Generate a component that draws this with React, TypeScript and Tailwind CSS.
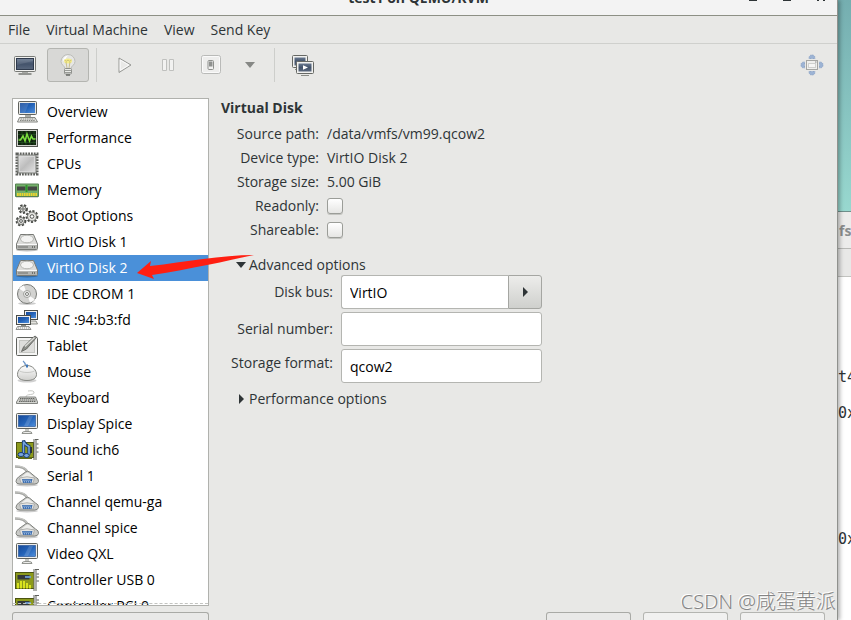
import React, { useState } from "react";

function Svg({ children, size = "size-6" }: { children: React.ReactNode; size?: string }) {
  return (
    <svg viewBox="0 0 24 24" className={`${size} shrink-0`} fill="none" aria-hidden="true">
      {children}
    </svg>
  );
}

function Gradients() {
  return (
    <svg className="absolute size-0" aria-hidden="true">
      <defs>
        <linearGradient id="blue" x1="0" y1="0" x2="1" y2="1">
          <stop offset="0" stopColor="#16499a" />
          <stop offset="0.5" stopColor="#2463b8" />
          <stop offset="1" stopColor="#4f8fdc" />
        </linearGradient>
        <linearGradient id="slate" x1="0" y1="0" x2="0" y2="1">
          <stop offset="0" stopColor="#68788f" />
          <stop offset="0.5" stopColor="#43536b" />
          <stop offset="1" stopColor="#59677d" />
        </linearGradient>
        <linearGradient id="metal" x1="0" y1="0" x2="1" y2="1">
          <stop offset="0" stopColor="#e4e4e4" />
          <stop offset="0.5" stopColor="#bdbdbd" />
          <stop offset="1" stopColor="#e6e6e6" />
        </linearGradient>
        <linearGradient id="shine" x1="0" y1="0" x2="0" y2="1">
          <stop offset="0" stopColor="#ffffff" />
          <stop offset="1" stopColor="#cfcfcc" />
        </linearGradient>
      </defs>
    </svg>
  );
}

function ComputerIcon() {
  return (
    <Svg>
      <rect x="3.5" y="1.5" width="18" height="13" rx="1" fill="#e8e8e4" stroke="#5f615d" />
      <rect x="5" y="3" width="15" height="10" fill="url(#blue)" />
      <path d="M5 3h9l-4 10H5z" fill="#fff" opacity=".12" />
      <path d="M10 15h6v2h-6z" fill="#a9aba6" />
      <path d="M4.500 17.500h15.500l2.500 4.500H2.500z" fill="#e9e9e6" stroke="#777975" strokeWidth=".9" />
      <path d="M5.500 19h14M5 20.500h15" stroke="#777975" strokeWidth=".9" strokeDasharray="1.500 .7" />
    </Svg>
  );
}

function PerformanceIcon() {
  return (
    <Svg>
      <rect x="1.500" y="3.500" width="21" height="17" fill="#11230f" stroke="#555753" />
      <rect x="2.500" y="4.500" width="19" height="15" stroke="#d0d1cc" />
      <path d="M3 8.500h18M3 12.500h18M3 16.500h18M7 5v14M11 5v14M15 5v14M19 5v14" stroke="#285a26" strokeWidth=".6" />
      <path d="M3.500 14h2l2.500-4 2 5 2-7 2.500 7 2-5 1.500 3h2.500" stroke="#7be03e" strokeWidth="1.500" />
    </Svg>
  );
}

function CpuIcon() {
  return (
    <Svg>
      <rect x="2" y="2" width="20" height="20" stroke="#5f615d" strokeWidth="3" strokeDasharray="1.800 1.000" />
      <rect x="3" y="3" width="18" height="18" rx="1" fill="url(#metal)" stroke="#7f817d" />
      <rect x="4.500" y="4.500" width="15" height="15" stroke="#dcdcdc" strokeWidth=".8" />
    </Svg>
  );
}

function MemoryIcon() {
  return (
    <Svg>
      <path d="M.5 6h23v12.500H.5z" fill="#74b06a" stroke="#568252" />
      <path d="M2 8.500h8.500v4H2zM12.500 8.500h9.500v4h-9.500z" fill="#444843" />
      <path d="M10.500 7h2v7h-2z" fill="#2f9a2c" />
      <path d="M2 16.500h20" stroke="#ecd42f" strokeWidth="3" strokeDasharray="1.700 .6" />
      <path d="M1 19.500h22" stroke="#d7d7d3" />
    </Svg>
  );
}

function Gear({ cx, cy, r }: { cx: number; cy: number; r: number }) {
  return (
    <g>
      <circle cx={cx} cy={cy} r={r + 0.3} stroke="#4a4c48" strokeWidth="3.2" strokeDasharray="1.900 1.300" />
      <circle cx={cx} cy={cy} r={r} fill="#e2e2df" stroke="#6a6c68" strokeWidth=".9" />
      <circle cx={cx} cy={cy} r={r / 2.5} fill="#fff" stroke="#4a4c48" strokeWidth=".9" />
    </g>
  );
}

function GearsIcon() {
  return (
    <Svg>
      <Gear cx={8} cy={5} r={3} />
      <Gear cx={6} cy={17} r={3.5} />
      <Gear cx={17} cy={12.5} r={4.5} />
    </Svg>
  );
}

function DiskIcon() {
  return (
    <Svg>
      <ellipse cx="12" cy="20" rx="11" ry="1.500" fill="#000" opacity=".25" />
      <path d="M5.500 4.500h13L22.500 14v4.500q0 1-1 1h-19q-1 0-1-1V14z" fill="#dcdcda" stroke="#777975" />
      <ellipse cx="12" cy="9" rx="6.500" ry="3.800" fill="#f3f3f2" stroke="#b5b6b2" />
      <path d="M2 14.500h20v4.500H2z" fill="#b3b4b1" />
      <path d="M3.500 17h9M17 17h3.500" stroke="#70726e" strokeDasharray="1 1" strokeWidth="2" />
      <path d="M2 14.500h20" stroke="#fafafa" />
    </Svg>
  );
}

function CdIcon() {
  return (
    <Svg>
      <ellipse cx="12" cy="21.500" rx="9" ry="1.500" fill="#000" opacity=".2" />
      <circle cx="12" cy="12" r="9.500" fill="#d3d3d1" stroke="#777975" />
      <path d="M12 12 4 6.500A9 9 0 0 1 9 3.500zM12 12l8 5.500a9 9 0 0 1-5 3z" fill="#fff" opacity=".9" />
      <circle cx="12" cy="12" r="3.500" fill="#eee" stroke="#a0a19d" />
      <circle cx="12" cy="12" r="1.500" fill="#fff" stroke="#777975" />
    </Svg>
  );
}

function NetworkIcon() {
  return (
    <Svg>
      <rect x="9.500" y="2.500" width="13" height="9" fill="#eee" stroke="#4b4d49" />
      <rect x="11" y="4" width="10" height="6" fill="url(#blue)" />
      <path d="M13 13h8l1.500 3H13z" fill="#e4e4e0" stroke="#777975" strokeWidth=".8" />
      <rect x="1.500" y="7.500" width="14" height="9" fill="#eee" stroke="#4b4d49" />
      <rect x="3" y="9" width="11" height="6" fill="url(#blue)" />
      <path d="M6 17h5v1.500H6z" fill="#888a85" />
      <path d="M2.500 18.500H14l2 3H1z" fill="#eeeeec" stroke="#777975" strokeWidth=".8" />
      <path d="M3 20h11" stroke="#999" strokeDasharray="1 1" />
    </Svg>
  );
}

function TabletIcon() {
  return (
    <Svg>
      <rect x="1.500" y="3.500" width="21" height="18" rx="1" fill="#f4f4f3" stroke="#5f615d" />
      <rect x="4.500" y="6.500" width="15" height="12" fill="#dededc" stroke="#c5c6c2" />
      <path d="M6.500 17.500l2-4.500L19 2.500q2-1 2.500 1L11.500 15z" fill="#8d8f8a" stroke="#5a5c58" strokeWidth=".8" />
      <path d="M10 12.500 19.500 3.500" stroke="#dfe0dc" strokeWidth="1.200" />
    </Svg>
  );
}

function MouseIcon() {
  return (
    <Svg>
      <ellipse cx="12" cy="20.500" rx="9.500" ry="2" fill="#000" opacity=".18" />
      <path d="M12 8C9 6 12 4 8 1" stroke="#6d96c8" strokeWidth="1.200" />
      <path d="M12 5.500c6 0 9.500 5 9.500 9s-4 6-9.500 6-9.500-2-9.500-6 3.500-9 9.500-9z" fill="url(#shine)" stroke="#858782" />
      <path d="M4.500 11c4 2 11 2 15 0" stroke="#bfc0bc" strokeWidth=".8" />
      <path d="M12 4.500v3" stroke="#3f77b9" strokeWidth="2" />
    </Svg>
  );
}

function KeyboardIcon() {
  return (
    <Svg>
      <path d="M11 11c0-4 9-1 8-5-1-2-5-1-6-1" stroke="#c7c8c4" />
      <path d="M4.500 11h16l2 5v1.500h-21V16z" fill="#d3d4d0" stroke="#777975" strokeWidth=".9" />
      <path d="M5 12.500h15M4.500 14h16M4 15.500h17" stroke="#555753" strokeWidth=".9" strokeDasharray="1.500 .6" />
    </Svg>
  );
}

function DisplayIcon() {
  return (
    <Svg>
      <rect x="1.500" y="1.500" width="21" height="15" rx="1" fill="#eeeeec" stroke="#5f615d" />
      <rect x="3.500" y="3.500" width="17" height="11" fill="url(#blue)" stroke="#1b4a8f" strokeWidth=".6" />
      <path d="M14 4h4l-5 10h-4z" fill="#fff" opacity=".15" />
      <path d="M10 17h4v2.500h-4z" fill="#c6c7c3" />
      <path d="M7 21.500q0-2 3-2h4q3 0 3 2z" fill="#eeeeec" stroke="#888a85" strokeWidth=".9" />
    </Svg>
  );
}

function SoundIcon() {
  return (
    <Svg>
      <rect x="1.500" y="4.500" width="17" height="15" fill="#8c9a1c" stroke="#4c5410" />
      <path d="M3 19h14v2H3z" fill="#5f6a12" />
      <path d="M13 9h4v6h-4z" fill="#2f3132" />
      <path d="M20 1v21" stroke="#5f615d" strokeWidth="3" />
      <path d="M20 1v21" stroke="#e4e5e2" strokeWidth="1.200" />
      <path d="M20 1.500h3.500M21.500 6h2M21.500 10h2M21.500 14h2" stroke="#5f615d" />
      <path d="M8.500 16V2.500q1 4 5.500 6v8" stroke="#173a70" strokeWidth="3.200" />
      <path d="M8.500 16V3.500q1 3 5.500 5v8" stroke="#78a6df" strokeWidth="1.500" />
      <ellipse cx="6" cy="16.500" rx="3" ry="2" fill="#78a6df" stroke="#173a70" />
      <ellipse cx="11.500" cy="17.500" rx="2.800" ry="2" fill="#78a6df" stroke="#173a70" />
    </Svg>
  );
}

function SerialIcon() {
  return (
    <Svg>
      <ellipse cx="12" cy="21" rx="11" ry="1.500" fill="#000" opacity=".2" />
      <path d="M0 2.500c6 0 11 1.500 12.500 6" stroke="#a5a6a3" strokeWidth="2.500" />
      <path d="M0 2c6 0 11 1.500 12.500 6" stroke="#d3d4d1" strokeWidth=".8" />
      <path d="M10.500 8q2-1.500 4 0l6 5q3.500 1.500 3 4.500-.5 2.500-4 2.500H5q-4 0-4-2.500t2.500-4.500z" fill="#c9cac7" stroke="#7f817d" />
      <path d="M11 9q1.500-1 3 0l4.500 4H6.500z" fill="#efefed" />
      <path d="M4.500 14q7.500-2.500 15 0l-1.500 5H6z" fill="#e4e4e2" stroke="#a5a6a3" strokeWidth=".8" />
      <path d="M7 15h10.500l-1 4h-8.500z" fill="#4271af" />
      <path d="M8.500 16.200h8M9 17.800h7" stroke="#b3cdf0" strokeDasharray="1 1" />
    </Svg>
  );
}

function CardIcon() {
  return (
    <Svg>
      <rect x="0.500" y="4.500" width="19" height="16" fill="#8c9a1c" stroke="#4c5410" />
      <rect x="2.500" y="7" width="12" height="4.500" fill="#34383a" />
      <path d="M10 9h6" stroke="#6c9bd2" strokeWidth="1.800" />
      <path d="M3 20.500V15M6 20.500V13M9 20.500V13M12 20.500V15M15 20.500V17" stroke="#e6f020" strokeWidth="1.700" />
      <path d="M20 1v22" stroke="#5f615d" strokeWidth="3" />
      <path d="M20 1v22" stroke="#e4e5e2" strokeWidth="1.200" />
      <path d="M20 1.500H24M21.500 6h2.500M21.500 9h2.500M21.500 13h2.500" stroke="#5f615d" />
    </Svg>
  );
}

function ConsoleIcon() {
  return (
    <Svg>
      <rect x="1.500" y="3.500" width="21" height="15" rx="1" fill="#f1f1ef" stroke="#777975" />
      <rect x="3.500" y="5.500" width="17" height="11" fill="url(#slate)" stroke="#2e3a4d" />
      <path d="M4 6h16v2L4 12z" fill="#fff" opacity=".1" />
      <path d="M9 19h6v1H9z" fill="#a9aba6" />
      <path d="M5.500 21h13" stroke="#8a8c87" strokeWidth="1.800" />
    </Svg>
  );
}

function BulbIcon() {
  return (
    <Svg>
      <path d="M12 1.500a7 7 0 0 0-7 7c0 3.500 4 4.500 4 7h6c0-2.500 4-3.500 4-7a7 7 0 0 0-7-7z" fill="#e6e6e4" stroke="#bcbdb9" />
      <path d="M7 7q1-4 5-4.500Q9 5 8.500 9z" fill="#fff" />
      <ellipse cx="12" cy="8" rx="4" ry="2.500" fill="#f6ee8a" />
      <path d="M8.500 7q1.800 2.500 3.500 0 1.700 2.500 3.500 0M10 9l1 6M14 9l-1 6" stroke="#b9ac6a" strokeWidth=".7" />
      <rect x="8.500" y="15.500" width="7" height="5.500" rx="1" fill="#eaebe8" stroke="#8d8f8b" />
      <path d="M8.500 17.500h7M8.500 19.500h7" stroke="#9a9c98" />
      <path d="M10 22h4" stroke="#666864" strokeWidth="1.500" />
    </Svg>
  );
}

function PlayIcon() {
  return (
    <Svg>
      <path d="M6 5 18 12 6 19.500z" fill="#e9e9e7" stroke="#979895" strokeLinejoin="round" />
      <path d="M7.200 7 15.800 12l-8.600 5.300z" stroke="#fafafa" />
    </Svg>
  );
}

function PauseIcon() {
  return (
    <Svg>
      <path d="M6.500 6.500h4v11h-4zM13.500 6.500h4v11h-4z" fill="#f2f2f1" stroke="#bfc0be" />
    </Svg>
  );
}

function PowerIcon() {
  return (
    <Svg>
      <rect x="2.500" y="2.500" width="19" height="18" rx="2" fill="#eeeeed" stroke="#b9bab8" />
      <rect x="3.500" y="3.500" width="17" height="16" rx="1" stroke="#fafafa" />
      <rect x="9" y="7.500" width="5.500" height="9" rx="1" fill="#f1f1f0" stroke="#8e908d" />
      <rect x="10" y="8.500" width="3.500" height="5" fill="#8f918f" />
    </Svg>
  );
}

function SnapshotIcon() {
  return (
    <Svg>
      <rect x="1.500" y="2.500" width="15" height="12" rx="1" fill="#f1f1ef" stroke="#666864" />
      <rect x="3.500" y="4.500" width="11" height="8" fill="url(#slate)" />
      <path d="M4 16.500h4" stroke="#8a8c87" />
      <rect x="5.500" y="8.500" width="17" height="12" rx="1" fill="#f1f1ef" stroke="#666864" />
      <rect x="7.500" y="10.500" width="13" height="8" fill="url(#slate)" />
      <path d="M12 12.200l5 2.300-5 2.300z" fill="#fff" />
      <path d="M10 22.500h8" stroke="#8a8c87" />
    </Svg>
  );
}

function FullscreenIcon() {
  return (
    <Svg>
      <g fill="#9cb3d4" stroke="#7d98c0" strokeWidth=".8" strokeDasharray="1 .6">
        <path d="M9 5.500q0-3.500 3-3.500t3 3.500zM9 18.500q0 3.500 3 3.500t3-3.500z" />
        <path d="M4.500 9Q1 9 1 12t3.500 3zM19.500 9q3.500 0 3.500 3t-3.500 3z" />
      </g>
      <rect x="6.500" y="7.500" width="11" height="9" fill="#efefed" stroke="#a5a6a3" />
      <rect x="8.500" y="10.500" width="7" height="4" fill="#f6f6f5" stroke="#cfd0ce" />
      <path d="M15 9h1.500" stroke="#888" />
    </Svg>
  );
}

const devices: { name: string; icon: () => React.ReactElement }[] = [
  { name: "Overview", icon: ComputerIcon },
  { name: "Performance", icon: PerformanceIcon },
  { name: "CPUs", icon: CpuIcon },
  { name: "Memory", icon: MemoryIcon },
  { name: "Boot Options", icon: GearsIcon },
  { name: "VirtIO Disk 1", icon: DiskIcon },
  { name: "VirtIO Disk 2", icon: DiskIcon },
  { name: "IDE CDROM 1", icon: CdIcon },
  { name: "NIC :94:b3:fd", icon: NetworkIcon },
  { name: "Tablet", icon: TabletIcon },
  { name: "Mouse", icon: MouseIcon },
  { name: "Keyboard", icon: KeyboardIcon },
  { name: "Display Spice", icon: DisplayIcon },
  { name: "Sound ich6", icon: SoundIcon },
  { name: "Serial 1", icon: SerialIcon },
  { name: "Channel qemu-ga", icon: SerialIcon },
  { name: "Channel spice", icon: SerialIcon },
  { name: "Video QXL", icon: DisplayIcon },
  { name: "Controller USB 0", icon: CardIcon },
  { name: "Controller PCI 0", icon: CardIcon },
];

const toolButton = "flex h-[34px] w-[42px] shrink-0 items-center justify-center rounded-[3px]";
const field = "h-[34px] w-full min-w-0 rounded-[3px] border border-[#b4b5b1] bg-white px-2 text-black outline-none";
const checkbox =
  "size-4 appearance-none rounded-[3px] border border-[#9b9d98] bg-linear-to-b from-white to-[#e6e6e4] shadow-[0_1px_0_#c4c5c1] checked:bg-[#4a90d9]";

function Separator() {
  return <div className="mx-1.5 h-[34px] w-px shrink-0 bg-[#cdcecb]" />;
}

function DeviceList() {
  const [selected, setSelected] = useState("VirtIO Disk 2");
  return (
    <nav aria-label="Devices" className="relative min-h-0 flex-1 overflow-hidden border border-[#b0b1ad] bg-white">
      <ul>
        {devices.map(({ name, icon: Icon }) => (
          <li key={name}>
            <button
              type="button"
              onClick={() => setSelected(name)}
              className={`flex h-[26px] w-full items-center gap-2 pl-0.5 text-left leading-5 whitespace-nowrap ${
                name === selected ? "bg-[#4a90d9] text-white" : "text-black"
              }`}
            >
              <Icon />
              {name}
            </button>
          </li>
        ))}
      </ul>
      <div className="absolute inset-x-0 bottom-px border-b border-dashed border-[#c3c4c1]" />
    </nav>
  );
}

function DiskDetails() {
  return (
    <section className="min-w-0 flex-1">
      <h2 className="h-5 leading-5 font-bold">Virtual Disk</h2>
      <div className="mt-1 grid grid-cols-[98px_1fr] gap-x-2 leading-6">
        <span className="text-right">Source path:</span>
        <span>/data/vmfs/vm99.qcow2</span>
        <span className="text-right">Device type:</span>
        <span>VirtIO Disk 2</span>
        <span className="text-right">Storage size:</span>
        <span>5.00 GiB</span>
        <label htmlFor="readonly" className="text-right">Readonly:</label>
        <span className="flex items-center">
          <input id="readonly" type="checkbox" className={checkbox} />
        </span>
        <label htmlFor="shareable" className="text-right">Shareable:</label>
        <span className="flex items-center">
          <input id="shareable" type="checkbox" className={checkbox} />
        </span>
      </div>
      <button type="button" aria-expanded="true" className="mt-3 ml-[15px] flex h-[21px] items-center gap-[3px]">
        <svg viewBox="0 0 10 6" className="h-1.5 w-2.5" aria-hidden="true">
          <path d="M0 0h10L5 6z" fill="#2e3436" />
        </svg>
        Advanced options
      </button>
      <div className="grid grid-cols-[112px_201px] items-center gap-x-2 gap-y-[3px] leading-5">
        <label htmlFor="bus" className="text-right">Disk bus:</label>
        <div className="flex">
          <input id="bus" defaultValue="VirtIO" className={`${field} rounded-r-none border-r-0`} />
          <button
            type="button"
            aria-label="Choose disk bus"
            className="flex h-[34px] w-[34px] shrink-0 items-center justify-center rounded-r-[3px] border border-[#a5a6a2] bg-linear-to-b from-[#ededeb] to-[#cfd0cd]"
          >
            <svg viewBox="0 0 5 10" className="h-2.5 w-[5px]" aria-hidden="true">
              <path d="M0 0l5 5-5 5z" fill="#2e3436" />
            </svg>
          </button>
        </div>
        <label htmlFor="serial" className="text-right">Serial number:</label>
        <input id="serial" className={field} />
        <label htmlFor="format" className="pb-1.5 text-right">Storage format:</label>
        <input id="format" defaultValue="qcow2" className={field} />
      </div>
      <button type="button" aria-expanded="false" className="mt-1.5 ml-[18px] flex h-5 items-center gap-[5px] leading-5">
        <svg viewBox="0 0 5 10" className="h-2.5 w-[5px]" aria-hidden="true">
          <path d="M0 0l5 5-5 5z" fill="#2e3436" />
        </svg>
        Performance options
      </button>
    </section>
  );
}

function BackgroundWindow() {
  return (
    <aside className="flex w-[13px] shrink-0 flex-col overflow-hidden bg-white whitespace-nowrap text-[#2e3436]">
      <div className="h-[211px] shrink-0 bg-linear-to-b from-[#75aeb0] to-[#98d8cf]" />
      <div className="flex h-[38px] shrink-0 items-center border-t border-b border-t-[#6f8f8b] border-b-[#b8b9b6] bg-[#ececeb] font-bold text-[#8b8e8f]">
        <span className="pl-px">fs</span>
      </div>
      <div className="h-7 shrink-0 border-b border-[#c2c3c0] bg-[#e8e8e7]" />
      <div className="flex flex-col pt-[82px] font-['DejaVu_Sans_Mono',monospace] text-[15px] leading-9">
        <span>t4</span>
        <span>0x</span>
        <span className="pt-[90px]">0x</span>
      </div>
    </aside>
  );
}

export default function App() {
  return (
    <div className="relative flex h-screen w-full overflow-hidden bg-white font-['Open_Sans','Noto_Sans',sans-serif] text-[14px] text-[#2e3436]">
      <Gradients />
      <main className="z-10 flex min-w-0 flex-1 flex-col border-r border-[#8f918d] bg-[#e8e8e6] shadow-[2px_0_4px_rgba(0,0,0,0.3)]">
        <header className="relative flex h-4 shrink-0 items-start justify-center overflow-hidden border-b border-[#8d9085] bg-[#f3f3f3]">
          <h1 className="-mt-3 leading-5 font-bold">test1 on QEMU/KVM</h1>
          <div className="absolute top-0 right-3 flex h-px gap-[26px]" aria-hidden="true">
            <span className="w-2 bg-[#2e3436]" />
            <span className="w-2 bg-[#2e3436]" />
            <span className="w-2 border-x-2 border-[#2e3436]" />
          </div>
        </header>
        <nav className="flex h-7 shrink-0 items-center gap-4 border-b border-[#cfd0cd] px-2" aria-label="Menu">
          <button type="button">File</button>
          <button type="button">Virtual Machine</button>
          <button type="button">View</button>
          <button type="button">Send Key</button>
        </nav>
        <div className="flex shrink-0 items-center gap-px px-1 pt-1" role="toolbar">
          <button type="button" aria-label="Console" className={toolButton}><ConsoleIcon /></button>
          <button type="button" aria-label="Details" className={`${toolButton} border border-[#b4b5b1] bg-[#d8d8d6]`}>
            <BulbIcon />
          </button>
          <Separator />
          <button type="button" aria-label="Run" className={toolButton}><PlayIcon /></button>
          <button type="button" aria-label="Pause" className={toolButton}><PauseIcon /></button>
          <button type="button" aria-label="Shut down" className={toolButton}><PowerIcon /></button>
          <button type="button" aria-label="Shut down options" className="flex h-[34px] w-[34px] shrink-0 items-center justify-center">
            <svg viewBox="0 0 10 6" className="h-1.5 w-2.5" aria-hidden="true">
              <path d="M0 0h10L5 6z" fill="#868885" />
            </svg>
          </button>
          <Separator />
          <button type="button" aria-label="Snapshots" className={toolButton}><SnapshotIcon /></button>
          <button type="button" aria-label="Full screen" className={`${toolButton} ml-auto`}><FullscreenIcon /></button>
        </div>
        <div className="flex min-h-0 flex-1 gap-3 px-3 pt-4">
          <div className="flex w-[197px] shrink-0 flex-col gap-1.5">
            <DeviceList />
            <button
              type="button"
              aria-label="Add hardware"
              className="h-2 shrink-0 rounded-t-[3px] border border-b-0 border-[#a9aaa6] bg-[#e9e9e8]"
            />
          </div>
          <div className="flex min-w-0 flex-1 flex-col justify-between">
            <DiskDetails />
            <div className="flex shrink-0 justify-end gap-3">
              <button type="button" aria-label="Remove" className="h-2 w-[85px] rounded-t-[3px] border border-b-0 border-[#a9aaa6] bg-[#e9e9e8]" />
              <button type="button" aria-label="Cancel" className="h-2 w-[85px] rounded-t-[3px] border border-b-0 border-[#b4b5b1] bg-[#f1f1f0]" />
              <button type="button" aria-label="Apply" className="h-2 w-[85px] rounded-t-[3px] border border-b-0 border-[#b4b5b1] bg-[#f1f1f0]" />
            </div>
          </div>
        </div>
      </main>
      <BackgroundWindow />
      <svg viewBox="0 0 120 30" className="absolute top-[252px] left-[136px] z-20 h-[30px] w-[120px]" aria-hidden="true">
        <path d="M1 21 15 9l-1 5C50 10 85 3 118 3 90 9 55 17 16 23l2 4z" fill="#ff1f12" />
      </svg>
      <p className="absolute right-[15px] bottom-1.5 z-20 font-['Noto_Sans','Noto_Sans_CJK_SC',sans-serif] text-[20px] leading-6 font-light text-[#858585] [text-shadow:-1px_-1px_0_#fff]">
        CSDN @咸蛋黄派
      </p>
    </div>
  );
}
